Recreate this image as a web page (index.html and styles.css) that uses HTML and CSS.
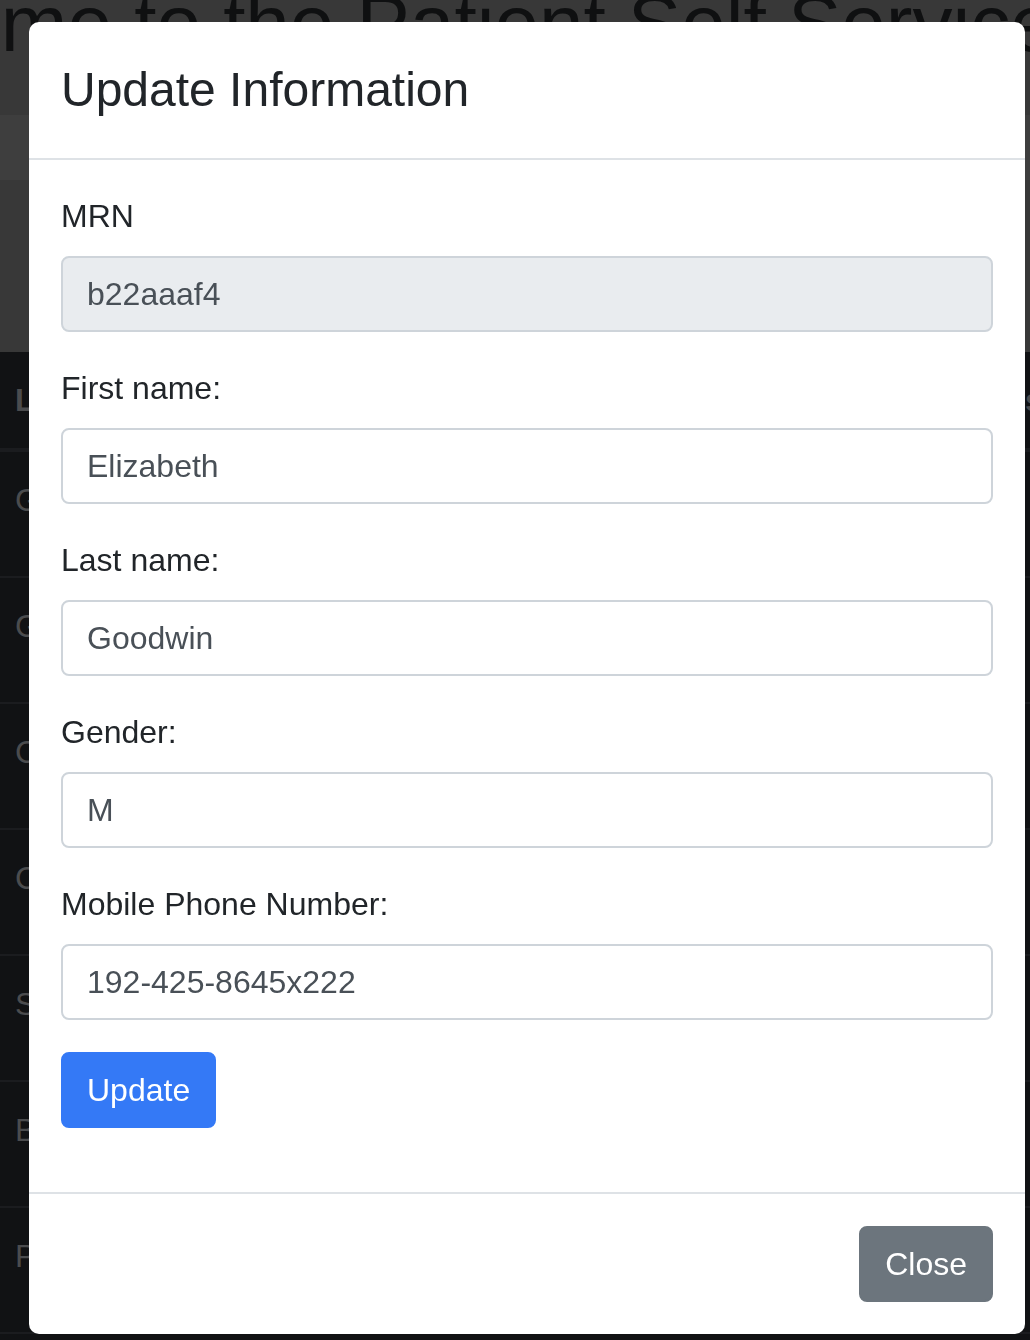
FILE: index.html
```html
<!DOCTYPE html>
<html lang="en">
<head>
<meta charset="utf-8">
<title>Update Information</title>
<link rel="stylesheet" href="styles.css">
</head>
<body>
<div class="page">
  <section class="hero">
    <h1 class="hero-title">Welcome to the Patient Self Service Portal</h1>
    <div class="hero-band"></div>
  </section>
  <section class="table">
    <div class="thead">
      <div class="th">Last</div>
      <div class="th th-right">s</div>
    </div>
    <div class="tr"><div class="td">Goodwin</div></div>
    <div class="tr"><div class="td">Green</div></div>
    <div class="tr"><div class="td">Collins</div></div>
    <div class="tr"><div class="td">Carter</div></div>
    <div class="tr"><div class="td">Smith</div></div>
    <div class="tr"><div class="td">Brown</div></div>
    <div class="tr"><div class="td">Parker</div></div>
  </section>
</div>

<div class="modal">
  <div class="modal-header">
    <h4 class="modal-title">Update Information</h4>
  </div>
  <div class="modal-body">
    <div class="form-group">
      <label class="label">MRN</label>
      <input class="input" type="text" value="b22aaaf4" disabled>
    </div>
    <div class="form-group">
      <label class="label">First name:</label>
      <input class="input" type="text" value="Elizabeth">
    </div>
    <div class="form-group">
      <label class="label">Last name:</label>
      <input class="input" type="text" value="Goodwin">
    </div>
    <div class="form-group">
      <label class="label">Gender:</label>
      <input class="input" type="text" value="M">
    </div>
    <div class="form-group">
      <label class="label">Mobile Phone Number:</label>
      <input class="input" type="text" value="192-425-8645x222">
    </div>
    <div class="form-group">
      <button class="btn btn-primary" type="button">Update</button>
    </div>
  </div>
  <div class="modal-footer">
    <button class="btn btn-secondary" type="button">Close</button>
  </div>
</div>
</body>
</html>
```

FILE: styles.css
```css
* { box-sizing: border-box; }

html, body {
  margin: 0;
  padding: 0;
  width: 1030px;
  height: 1340px;
  overflow: hidden;
  background: #111214;
  font-family: "Liberation Sans", Arial, sans-serif;
}

.page {
  width: 1030px;
  height: 1340px;
  overflow: hidden;
}

.hero {
  position: relative;
  height: 352px;
  background: #383838;
  padding-top: 115px;
  overflow: hidden;
}

.hero-band {
  height: 65px;
  background: #3e3e3e;
}

.hero-title {
  position: absolute;
  top: -24px;
  left: -220px;
  margin: 0;
  font-size: 80px;
  line-height: 96px;
  font-weight: 400;
  color: #0f1011;
  white-space: nowrap;
}

.table {
  background: #111214;
  color: #4b4c4e;
  font-size: 32px;
}

.thead {
  display: grid;
  grid-template-columns: 1010px 1fr;
  border-bottom: 4px solid #1b1c1f;
  height: 100px;
}

.th {
  padding: 24px 15px;
  line-height: 48px;
  font-weight: 700;
  white-space: nowrap;
  overflow: hidden;
}

.tr {
  height: 126px;
  border-bottom: 2px solid #1b1c1f;
}

.td {
  padding: 24px 15px;
  line-height: 48px;
}

/* Modal */
.modal {
  position: fixed;
  top: 22px;
  left: 29px;
  width: 996px;
  background: #fff;
  border-radius: 10px;
  overflow: hidden;
  color: #212529;
}

.modal-header {
  padding: 32px;
  border-bottom: 2px solid #dee2e6;
}

.modal-title {
  margin: 0;
  font-size: 48px;
  line-height: 72px;
  font-weight: 400;
  color: #212529;
}

.modal-body {
  padding: 32px;
}

.form-group {
  margin-bottom: 32px;
}

.label {
  display: block;
  margin-bottom: 16px;
  font-size: 32px;
  line-height: 48px;
  color: #212529;
}

.input {
  display: block;
  width: 100%;
  height: 76px;
  padding: 12px 24px;
  border: 2px solid #ced4da;
  border-radius: 8px;
  font-family: "Liberation Sans", Arial, sans-serif;
  font-size: 32px;
  line-height: 48px;
  color: #495057;
  background: #fff;
  outline: none;
}

.input:disabled {
  background: #e9ecef;
  color: #495057;
  -webkit-text-fill-color: #495057;
  opacity: 1;
}

.btn {
  display: inline-block;
  height: 76px;
  padding: 12px 24px;
  border: 2px solid transparent;
  border-radius: 8px;
  font-family: "Liberation Sans", Arial, sans-serif;
  font-size: 32px;
  line-height: 48px;
  color: #fff;
  cursor: pointer;
}

.btn-primary {
  background: #3479f6;
  border-color: #3479f6;
}

.btn-secondary {
  background: #6c757d;
  border-color: #6c757d;
  margin: 8px;
}

.modal-footer {
  display: flex;
  justify-content: flex-end;
  padding: 24px;
  border-top: 2px solid #dee2e6;
}
```
